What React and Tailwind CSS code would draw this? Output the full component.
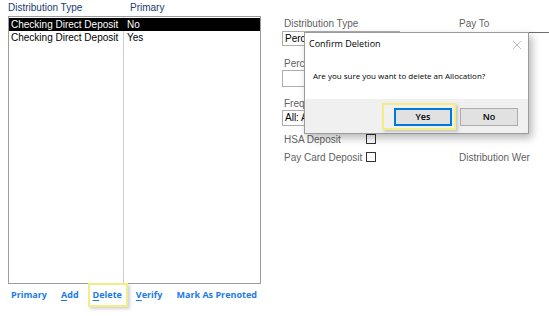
import React from 'react';

const ROWS = [
  { type: 'Checking Direct Deposit', primary: 'No', selected: true },
  { type: 'Checking Direct Deposit', primary: 'Yes', selected: false },
];

const LINKS = [
  { label: 'Primary' },
  { label: 'Add', key: 'A' },
  { label: 'Delete', key: 'D', highlight: true },
  { label: 'Verify', key: 'V' },
  { label: 'Mark As Prenoted' },
];

function LinkLabel({ label, hotkey }) {
  if (!hotkey) return label;
  return (
    <>
      <span className="underline underline-offset-2">{label[0]}</span>
      {label.slice(1)}
    </>
  );
}

function ConfirmDialog() {
  return (
    <div className="absolute left-[304px] top-[32px] w-[225px] h-[102px] bg-white border border-[#9b9b9b] shadow-[3px_4px_8px_rgba(0,0,0,0.28)] flex flex-col font-['Open_Sans',sans-serif] text-[9px] text-black">
      <div className="h-[22px] flex items-center justify-between pl-[4px] pr-[6px]">
        <span>Confirm Deletion</span>
        <svg width="10" height="10" viewBox="0 0 10 10" className="mt-[1px]">
          <path d="M1 1 L9 9 M9 1 L1 9" stroke="#b4b4b4" strokeWidth="0.9" />
        </svg>
      </div>
      <div className="flex-1 flex items-center pl-[8px] pb-[2px] text-[8px]">
        Are you sure you want to delete an Allocation?
      </div>
      <div className="h-[34px] bg-[#f0f0f0] flex items-center justify-end gap-[8px] pr-[10px] pt-[1px]">
        <div className="relative flex">
          <div className="absolute -left-[12px] -top-[5px] -right-[4px] -bottom-[4px] border-2 border-[#f1ee8a] shadow-[2px_2px_3px_rgba(0,0,0,0.18)]" />
          <button className="relative w-[58px] h-[18px] bg-[#e1e1e1] border-2 border-[#0078d7] font-semibold text-[9px] leading-none">
            Yes
          </button>
        </div>
        <button className="w-[58px] h-[18px] bg-[#e1e1e1] border border-[#adadad] font-semibold text-[9px] leading-none">
          No
        </button>
      </div>
    </div>
  );
}

export default function App() {
  return (
    <div className="relative w-[549px] h-[316px] bg-white overflow-hidden flex font-['Liberation_Sans',Arial,sans-serif] text-[10px]">
      {/* Allocation list */}
      <div className="w-[274px] shrink-0 pl-[8px] flex flex-col">
        <div className="h-[16px] flex items-end pb-[1px] text-[#1d3b70]">
          <span className="w-[115px]">Distribution Type</span>
          <span className="pl-[7px]">Primary</span>
        </div>
        <div className="relative w-[253px] h-[268px] border border-[#9c9c9c] pt-[1px]">
          <div className="absolute left-[114px] top-0 bottom-0 w-px bg-[#cdcdcd]" />
          {ROWS.map((r, i) => (
            <div
              key={i}
              className={`relative flex h-[13px] items-center ${r.selected ? 'bg-black text-white' : 'text-black'}`}
            >
              <span className="w-[115px] pl-[2px]">{r.type}</span>
              <span className="pl-[3px]">{r.primary}</span>
            </div>
          ))}
        </div>
        <div className="flex gap-[14px] pl-[3px] pt-[4px] font-['Open_Sans',sans-serif] font-bold text-[9px] text-[#1a7ae6]">
          {LINKS.map(l => (
            <span key={l.label} className="relative">
              {l.highlight && (
                <span className="absolute -left-[5px] -top-[5px] -right-[6px] -bottom-[5px] border-2 border-[#f1ee8a] shadow-[2px_2px_3px_rgba(0,0,0,0.18)]" />
              )}
              <span className="relative">
                <LinkLabel label={l.label} hotkey={l.key} />
              </span>
            </span>
          ))}
        </div>
      </div>

      {/* Detail form */}
      <div className="ml-[8px] pt-[16px] flex-1 min-w-0 text-[#5f5f5f]">
        <div className="flex">
          <div className="w-[176px] shrink-0">
            <div className="pl-[2px] h-[15px]">Distribution Type</div>
            <div className="w-[118px] h-[15px] border border-[#adadad] text-black pl-[2px] leading-[13px]">Perc</div>
          </div>
          <div className="flex-1">
            <div className="pl-[1px] h-[16px]">Pay To</div>
            <div className="h-[15px] border-t border-[#6f6f6f]" />
          </div>
        </div>
        <div className="pl-[2px] mt-[9px] h-[14px]">Perc</div>
        <div className="w-[118px] h-[17px] border border-[#adadad]" />
        <div className="pl-[2px] mt-[9px] h-[14px]">Freq</div>
        <div className="w-[118px] h-[16px] border border-[#adadad] text-black pl-[2px] leading-[14px]">All: A</div>
        <div className="flex items-center mt-[8px] h-[10px]">
          <span className="w-[84px] pl-[2px]">HSA Deposit</span>
          <span className="w-[10px] h-[10px] border border-[#333]" />
        </div>
        <div className="flex items-center mt-[8px] h-[10px]">
          <span className="w-[84px] pl-[2px]">Pay Card Deposit</span>
          <span className="w-[10px] h-[10px] border border-[#333]" />
          <span className="ml-[83px] whitespace-nowrap">Distribution Wer</span>
        </div>
      </div>

      <ConfirmDialog />
    </div>
  );
}
